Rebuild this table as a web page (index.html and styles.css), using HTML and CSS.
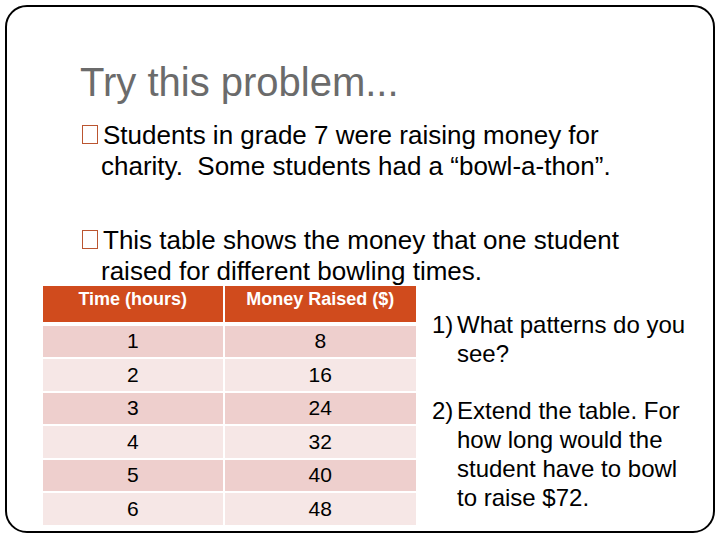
FILE: index.html
```html
<!DOCTYPE html>
<html lang="en">
<head>
<meta charset="utf-8">
<title>Try this problem...</title>
<link rel="stylesheet" href="styles.css">
</head>
<body>
<div class="slide">
  <h1 class="title">Try this problem...</h1>
  <div class="bullets">
    <p class="bullet"><span class="box"></span>Students in grade 7 were raising money for charity.&nbsp; Some students had a “bowl-a-thon”.</p>
    <p class="bullet second"><span class="box"></span>This table shows the money that one student raised for different bowling times.</p>
  </div>
  <div class="lower">
    <div class="table">
      <div class="th">Time (hours)</div>
      <div class="th">Money Raised ($)</div>
      <div class="td odd">1</div><div class="td odd">8</div>
      <div class="td even">2</div><div class="td even">16</div>
      <div class="td odd">3</div><div class="td odd">24</div>
      <div class="td even">4</div><div class="td even">32</div>
      <div class="td odd">5</div><div class="td odd">40</div>
      <div class="td even">6</div><div class="td even">48</div>
    </div>
    <div class="questions">
      <p class="q"><span class="num">1)</span>What patterns do you see?</p>
      <p class="q q2"><span class="num">2)</span>Extend the table. For how long would the student have to bowl to raise $72.</p>
    </div>
  </div>
</div>
</body>
</html>
```
FILE: styles.css
```css
html, body {
  margin: 0;
  padding: 0;
  background: #ffffff;
}

body {
  font-family: "Liberation Sans", Arial, sans-serif;
  color: #000;
}

.slide {
  margin: 5px;
  width: 710px;
  height: 528px;
  box-sizing: border-box;
  border: 2px solid #000;
  border-radius: 22px;
  overflow: hidden;
}

.title {
  margin: 55px 0 0 73px;
  font-size: 40px;
  line-height: 40px;
  font-weight: normal;
  color: #6b6b6b;
}

.bullets {
  margin: 17.5px 0 0 94px;
  width: 550px;
}

.bullet {
  margin: 0;
  font-size: 26px;
  line-height: 31px;
  padding-left: 0;
  text-indent: -19px;
}

.bullet.second {
  margin-top: 43px;
}

.box {
  display: inline-block;
  box-sizing: border-box;
  width: 16px;
  height: 19px;
  margin-right: 5px;
  border: 1.5px solid #bb5530;
  text-indent: 0;
}

.lower {
  display: flex;
  margin: -0.5px 0 0 36px;
}

.table {
  display: grid;
  grid-template-columns: 179.5px 191.5px;
  grid-template-rows: 37.7px repeat(6, 31.5px);
  column-gap: 2px;
  row-gap: 2px;
  flex: none;
}

.th {
  height: 36px;
  box-sizing: border-box;
  padding-top: 3px;
  background: #d04b1d;
  color: #fff;
  font-weight: bold;
  font-size: 18px;
  line-height: 20px;
  text-align: center;
}

.td {
  display: flex;
  align-items: center;
  justify-content: center;
  font-size: 21px;
}

.odd {
  background: #eecfcd;
}

.even {
  background: #f6e7e6;
}

.questions {
  margin: 24px 0 0 16px;
  width: 268px;
}

.q {
  margin: 0;
  font-size: 24px;
  line-height: 29px;
  padding-left: 25px;
  text-indent: -25px;
}

.q2 {
  margin-top: 28px;
}

.num {
  display: inline-block;
  width: 25px;
  text-indent: 0;
}
```
